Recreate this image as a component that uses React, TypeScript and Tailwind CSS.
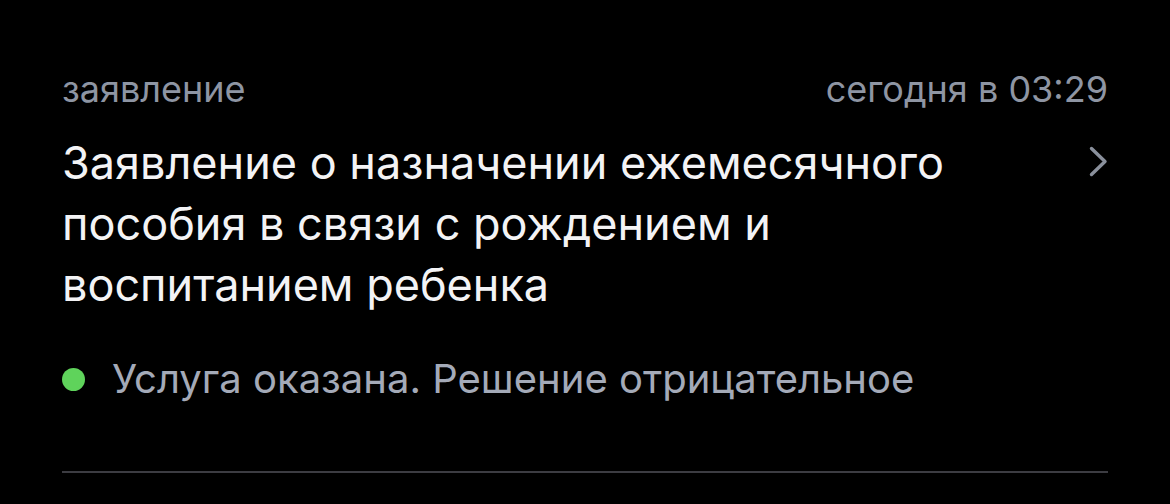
export default function App() {
  return (
    <div className="min-h-[504px] w-full bg-black font-['Inter','Noto_Sans',sans-serif] antialiased">
      <div className="px-[62px] pt-[70px]">
        <div className="flex items-baseline justify-between text-[36px] leading-[38px] text-[#8e95a3]">
          <span>заявление</span>
          <span>сегодня в 03:29</span>
        </div>
        <div className="mt-[24px] flex items-start justify-between gap-8">
          <h1 className="max-w-[940px] text-[45px] leading-[61px] font-normal text-[#f3f3f5]">
            Заявление о назначении ежемесячного пособия в связи с рождением и
            воспитанием ребенка
          </h1>
          <svg
            className="mt-[14px] shrink-0"
            width="19"
            height="31"
            viewBox="0 0 19 31"
            fill="none"
          >
            <path
              d="M2.5 2.5 L16 15.5 L2.5 28.5"
              stroke="#8a909c"
              strokeWidth="3.4"
              strokeLinecap="round"
              strokeLinejoin="round"
            />
          </svg>
        </div>
        <div className="mt-[42px] flex items-center gap-[27px]">
          <span className="h-[23px] w-[23px] shrink-0 rounded-full bg-[#5fd35b]" />
          <span className="text-[40px] leading-[44px] text-[#a4aab8]">
            Услуга оказана. Решение отрицательное
          </span>
        </div>
        <div className="mt-[70px] h-[2px] bg-[#3c3c42]" />
      </div>
    </div>
  );
}
